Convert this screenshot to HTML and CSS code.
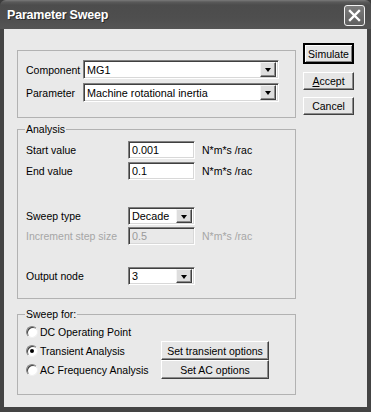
FILE: index.html
```html
<!DOCTYPE html>
<html>
<head>
<meta charset="utf-8">
<link rel="stylesheet" href="styles.css">
</head>
<body>
<div class="window">
  <div class="titlebar">
    <span class="title">Parameter Sweep</span>
    <div class="close">
      <svg width="13" height="13" viewBox="0 0 13 13"><path d="M2 2 L11 11 M11 2 L2 11" stroke="#fff" stroke-width="2.4" stroke-linecap="square"/></svg>
    </div>
  </div>
  <div class="client">
    <div class="groups">
      <div class="group g-comp">
        <div class="row">
          <span class="lbl lbl-comp">Component</span>
          <div class="combo combo-wide"><span class="val">MG1</span><span class="arrow"><i></i></span></div>
        </div>
        <div class="row">
          <span class="lbl lbl-comp">Parameter</span>
          <div class="combo combo-wide"><span class="val">Machine rotational inertia</span><span class="arrow"><i></i></span></div>
        </div>
      </div>

      <div class="group g-analysis">
        <span class="legend">Analysis</span>
        <div class="row r1">
          <span class="lbl lbl-an">Start value</span>
          <div class="field"><span class="val">0.001</span></div>
          <span class="unit">N*m*s /rac</span>
        </div>
        <div class="row r2">
          <span class="lbl lbl-an">End value</span>
          <div class="field"><span class="val">0.1</span></div>
          <span class="unit">N*m*s /rac</span>
        </div>
        <div class="row r3">
          <span class="lbl lbl-an">Sweep type</span>
          <div class="combo combo-small"><span class="val">Decade</span><span class="arrow"><i></i></span></div>
        </div>
        <div class="row r4 disabled">
          <span class="lbl lbl-an">Increment step size</span>
          <div class="field field-dis"><span class="val">0.5</span></div>
          <span class="unit">N*m*s /rac</span>
        </div>
        <div class="row r5">
          <span class="lbl lbl-an">Output node</span>
          <div class="combo combo-small"><span class="val">3</span><span class="arrow"><i></i></span></div>
        </div>
      </div>

      <div class="group g-sweep">
        <span class="legend">Sweep for:</span>
        <div class="row rr">
          <span class="radio"></span><span class="rlbl">DC Operating Point</span>
        </div>
        <div class="row rr">
          <span class="radio checked"></span><span class="rlbl">Transient Analysis</span>
          <div class="btn btn-opt">Set transient options</div>
        </div>
        <div class="row rr">
          <span class="radio"></span><span class="rlbl">AC Frequency Analysis</span>
          <div class="btn btn-opt">Set AC options</div>
        </div>
      </div>
    </div>

    <div class="buttons">
      <div class="btn btn-side btn-default">Simulate</div>
      <div class="btn btn-side btn-accept"><u>A</u>ccept</div>
      <div class="btn btn-side btn-cancel">Cancel</div>
    </div>
  </div>
</div>
</body>
</html>
```

FILE: styles.css
```css
* { box-sizing: border-box; }
html, body { margin: 0; padding: 0; background: #3c3c3c; }
body {
  font-family: "Liberation Sans", Arial, sans-serif;
  font-size: 10.5px;
  color: #000;
}
.window {
  width: 371px;
  height: 412px;
  background: #444;
  border-radius: 6px 6px 0 0;
  display: flex;
  flex-direction: column;
  overflow: hidden;
}
.titlebar {
  height: 29px;
  flex: none;
  display: flex;
  align-items: center;
  justify-content: space-between;
  padding: 0 6px 0 7px;
  background: linear-gradient(#7a7a7a 0, #5a5a5a 2px, #4c4c4c 5px, #4e4e4e 60%, #555 100%);
}
.title {
  color: #fff;
  font-weight: bold;
  font-size: 12.5px;
  letter-spacing: -0.2px;
  text-shadow: 1px 1px 0 #2a2a2a;
  margin-top: 1px;
}
.close {
  width: 21px;
  height: 21px;
  border: 1px solid #f2f2f2;
  border-radius: 3px;
  background: linear-gradient(#7c7c7c, #5f5f5f);
  display: flex;
  align-items: center;
  justify-content: center;
  margin-top: 2px;
}
.close svg { display: block; }

.client {
  flex: 1;
  margin: 0 4px 5px 4px;
  background: #e9e9e9;
  display: flex;
  align-items: flex-start;
  padding: 14px 0 0 13px;
  gap: 7px;
}
.groups {
  width: 279px;
  margin-top: 7px;
  display: flex;
  flex-direction: column;
}
.group {
  position: relative;
  border: 1px solid #b2b2b2;
  display: flex;
  flex-direction: column;
}
.legend {
  position: absolute;
  top: -8px;
  left: 7px;
  padding: 0 1px;
  background: #e9e9e9;
  line-height: 14px;
}
.g-comp { height: 68px; padding: 9px 0 0 8px; gap: 4px; }
.g-analysis { height: 170px; margin-top: 11px; padding: 11px 0 0 8px; }
.g-sweep { height: 81px; margin-top: 15px; padding: 7px 0 0 7px; }

.row { display: flex; align-items: center; height: 19px; }
.lbl { flex: none; white-space: nowrap; }
.lbl-comp { width: 57px; }
.lbl-an { width: 102px; }
.r1 { height: 18px; }
.r2 { height: 18px; margin-top: 3px; }
.r3 { height: 18px; margin-top: 27px; }
.r4 { height: 18px; margin-top: 2px; }
.r5 { height: 18px; margin-top: 22px; }

.combo, .field {
  height: 100%;
  background: #fff;
  border: 1px solid;
  border-color: #808080 #fff #fff #808080;
  box-shadow: inset 1px 1px 0 #404040, inset -1px -1px 0 #d8d8d8;
  display: flex;
  align-items: center;
  padding: 0 2px 0 3px;
  position: relative;
}
.combo-wide { width: 196px; }
.combo-small { width: 67px; }
.field { width: 67px; }
.val { flex: 1; white-space: nowrap; overflow: hidden; font-size: 10.8px; }
.arrow {
  flex: none;
  width: 16px;
  height: calc(100% - 2px);
  background: #dedede;
  border: 1px solid;
  border-color: #f4f4f4 #404040 #404040 #f4f4f4;
  box-shadow: inset -1px -1px 0 #8a8a8a;
  display: flex;
  align-items: center;
  justify-content: center;
}
.arrow i {
  display: block;
  width: 0;
  height: 0;
  border-left: 3.5px solid transparent;
  border-right: 3.5px solid transparent;
  border-top: 4px solid #000;
  margin-top: 1px;
}
.unit { margin-left: 7px; white-space: nowrap; }
.disabled .lbl, .disabled .unit { color: #a6a6a6; }
.field-dis { background: #e9e9e9; color: #9a9a9a; }

.rr { height: 19px; }
.radio {
  flex: none;
  width: 12px;
  height: 12px;
  border-radius: 50%;
  background: #fff;
  border: 1px solid;
  border-color: #808080 #f0f0f0 #f0f0f0 #808080;
  box-shadow: inset 1px 1px 0 #404040;
  margin-left: 1px;
  position: relative;
}
.radio.checked::after {
  content: "";
  position: absolute;
  left: 3px;
  top: 3px;
  width: 4px;
  height: 4px;
  border-radius: 50%;
  background: #000;
}
.rlbl { width: 121px; margin-left: 2px; white-space: nowrap; }

.btn {
  background: #e6e6e6;
  border: 1px solid;
  border-color: #fff #404040 #404040 #fff;
  box-shadow: inset -1px -1px 0 #8c8c8c;
  display: flex;
  align-items: center;
  justify-content: center;
  white-space: nowrap;
}
.btn-opt { width: 108px; height: 19px; }
.buttons { display: flex; flex-direction: column; width: 51px; }
.btn-side { width: 51px; height: 18px; }
.btn-default {
  height: 21px;
  border: 2px solid;
  border-color: #000;
  box-shadow: inset 1px 1px 0 #fff, inset -1px -1px 0 #808080;
}
.btn-accept { margin-top: 8px; }
.btn-cancel { margin-top: 7px; }
.btn u { text-decoration: underline; }
```
